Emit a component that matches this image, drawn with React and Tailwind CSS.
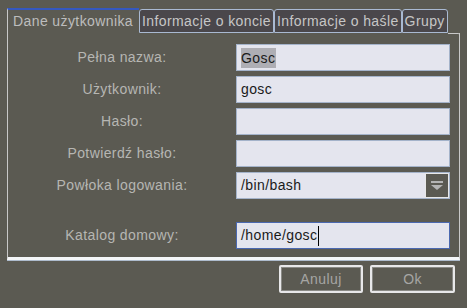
import React from 'react';

const font = { fontFamily: '"Liberation Sans", Arial, sans-serif' };

const Tab = ({ label, active }) =>
  active ? (
    <div className="h-[25px] flex items-center pl-[5px] pr-[6px] border-l border-l-[#c8c8c8] border-t-2 border-t-[#3558c0] text-[#bdbdbd]">
      {label}
    </div>
  ) : (
    <div className="h-[24px] flex items-center px-[2px] bg-[#4a474b] border border-[#a9b9d2] rounded-t-[3px] text-[#c6c6c6]">
      {label}
    </div>
  );

const Field = ({ value, focused, selected }) => (
  <div
    className={`h-[27px] flex items-center pl-[4px] bg-[#e4e5ee] border text-[#1a1a1a] ${
      focused ? 'border-[#4a68b0]' : 'border-[#a4b3ca]'
    }`}
  >
    {selected ? <span className="bg-[#aeaeb4] leading-[20px] pr-[1px]">{value}</span> : value}
    {focused && <span className="w-px h-[20px] bg-black ml-px" />}
  </div>
);

const Label = ({ children }) => (
  <div className="h-[27px] flex items-center justify-center text-[#b6b6b2]">{children}</div>
);

const Dropdown = ({ value }) => (
  <div className="h-[27px] flex bg-[#e4e5ee] border border-[#a4b3ca] text-[#1a1a1a]">
    <div className="flex-1 flex items-center pl-[4px]">{value}</div>
    <div className="w-[24px] flex items-center justify-center bg-[#5b5a52] border border-[#e8e8e8]">
      <svg width="12" height="10" viewBox="0 0 12 10">
        <rect x="0" y="0" width="12" height="2" fill="#b4b4b4" />
        <polygon points="0,4 12,4 6,9" fill="#b4b4b4" />
      </svg>
    </div>
  </div>
);

const Button = ({ children, width }) => (
  <div
    className={`${width} h-[28px] flex items-center justify-center rounded-[2px] border-2 border-[#e8e8ea] shadow-[inset_0_0_0_1px_#8a8a86] text-[#a6a6a4]`}
  >
    {children}
  </div>
);

export default function App() {
  return (
    <div className="w-[467px] h-[308px] bg-[#5b5a52] text-[14px] tracking-[0.4px] flex flex-col" style={font}>
      <div className="flex items-end pl-[7px] pr-[7px] pt-[8px]">
        <Tab label="Dane użytkownika" active />
        <Tab label="Informacje o koncie" />
        <Tab label="Informacje o haśle" />
        <Tab label="Grupy" />
        <div className="flex-1 h-[2px] border-t border-r border-[#c8c8c8] rounded-tr-[3px] mb-[-2px]" />
      </div>

      <div className="mx-[7px] h-[227px] border-l border-r border-l-[#c8c8c8] border-r-[#c8c8c8] border-b-[3px] border-b-[#f4f6f8] shadow-[0_1px_0_#aebccd] pt-[11px] pr-[9px] flex flex-col gap-[5px]">
        <div className="grid grid-cols-[228px_1fr] gap-y-[5px]">
          <Label>Pełna nazwa:</Label>
          <Field value="Gosc" selected />
          <Label>Użytkownik:</Label>
          <Field value="gosc" />
          <Label>Hasło:</Label>
          <Field value="" />
          <Label>Potwierdź hasło:</Label>
          <Field value="" />
          <Label>Powłoka logowania:</Label>
          <Dropdown value="/bin/bash" />
        </div>
        <div className="grid grid-cols-[228px_1fr] mt-[18px]">
          <Label>Katalog domowy:</Label>
          <Field value="/home/gosc" focused />
        </div>
      </div>

      <div className="flex justify-end gap-[7px] pr-[12px] pt-[5px]">
        <Button width="w-[84px]">Anuluj</Button>
        <Button width="w-[85px]">Ok</Button>
      </div>
    </div>
  );
}
